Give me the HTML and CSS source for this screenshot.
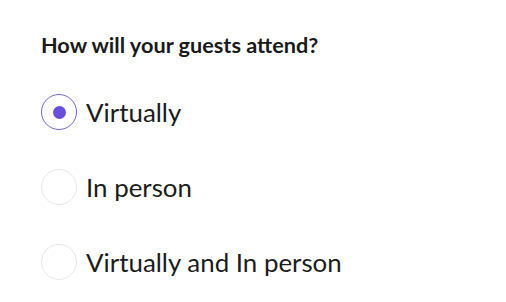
FILE: index.html
```html
<!DOCTYPE html>
<html lang="en">

<head>
    <meta charset="UTF-8">
    <meta name="viewport" content="width=device-width, initial-scale=1.0">
    <title>Attendance</title>
    <link rel="stylesheet" href="styles.css">
</head>

<body>
    <div class="question">
        <h3 class="title">How will your guests attend?</h3>
        <ul class="optionList">
            <li class="option checked"><span class="radio"></span><span class="label">Virtually</span></li>
            <li class="option"><span class="radio"></span><span class="label">In person</span></li>
            <li class="option"><span class="radio"></span><span class="label">Virtually and In person</span></li>
        </ul>
    </div>
</body>

</html>
```

FILE: styles.css
```css
* {
    margin: 0;
    padding: 0;
    box-sizing: border-box;
}

body {
    background-color: #fff;
    font-family: Lato, "Noto Sans", sans-serif;
    color: #1c1c1c;
}

.question {
    padding: 32px 41px 0;
}

.title {
    font-size: 21.7px;
    font-weight: 700;
    line-height: 26px;
    color: #1a1a1a;
}

.optionList {
    list-style: none;
    margin-top: 36px;
    display: flex;
    flex-direction: column;
    gap: 39px;
}

.option {
    display: flex;
    align-items: center;
    gap: 9px;
    height: 36px;
}

.radio {
    width: 36px;
    height: 36px;
    border-radius: 50%;
    border: 1px solid #e6e6e6;
    display: flex;
    align-items: center;
    justify-content: center;
}

.option.checked .radio {
    border-color: #7a63d6;
}

.option.checked .radio::after {
    content: '';
    width: 13px;
    height: 13px;
    border-radius: 50%;
    background-color: #6a4fdb;
}

.label {
    font-size: 25.9px;
    line-height: 30px;
}
```
